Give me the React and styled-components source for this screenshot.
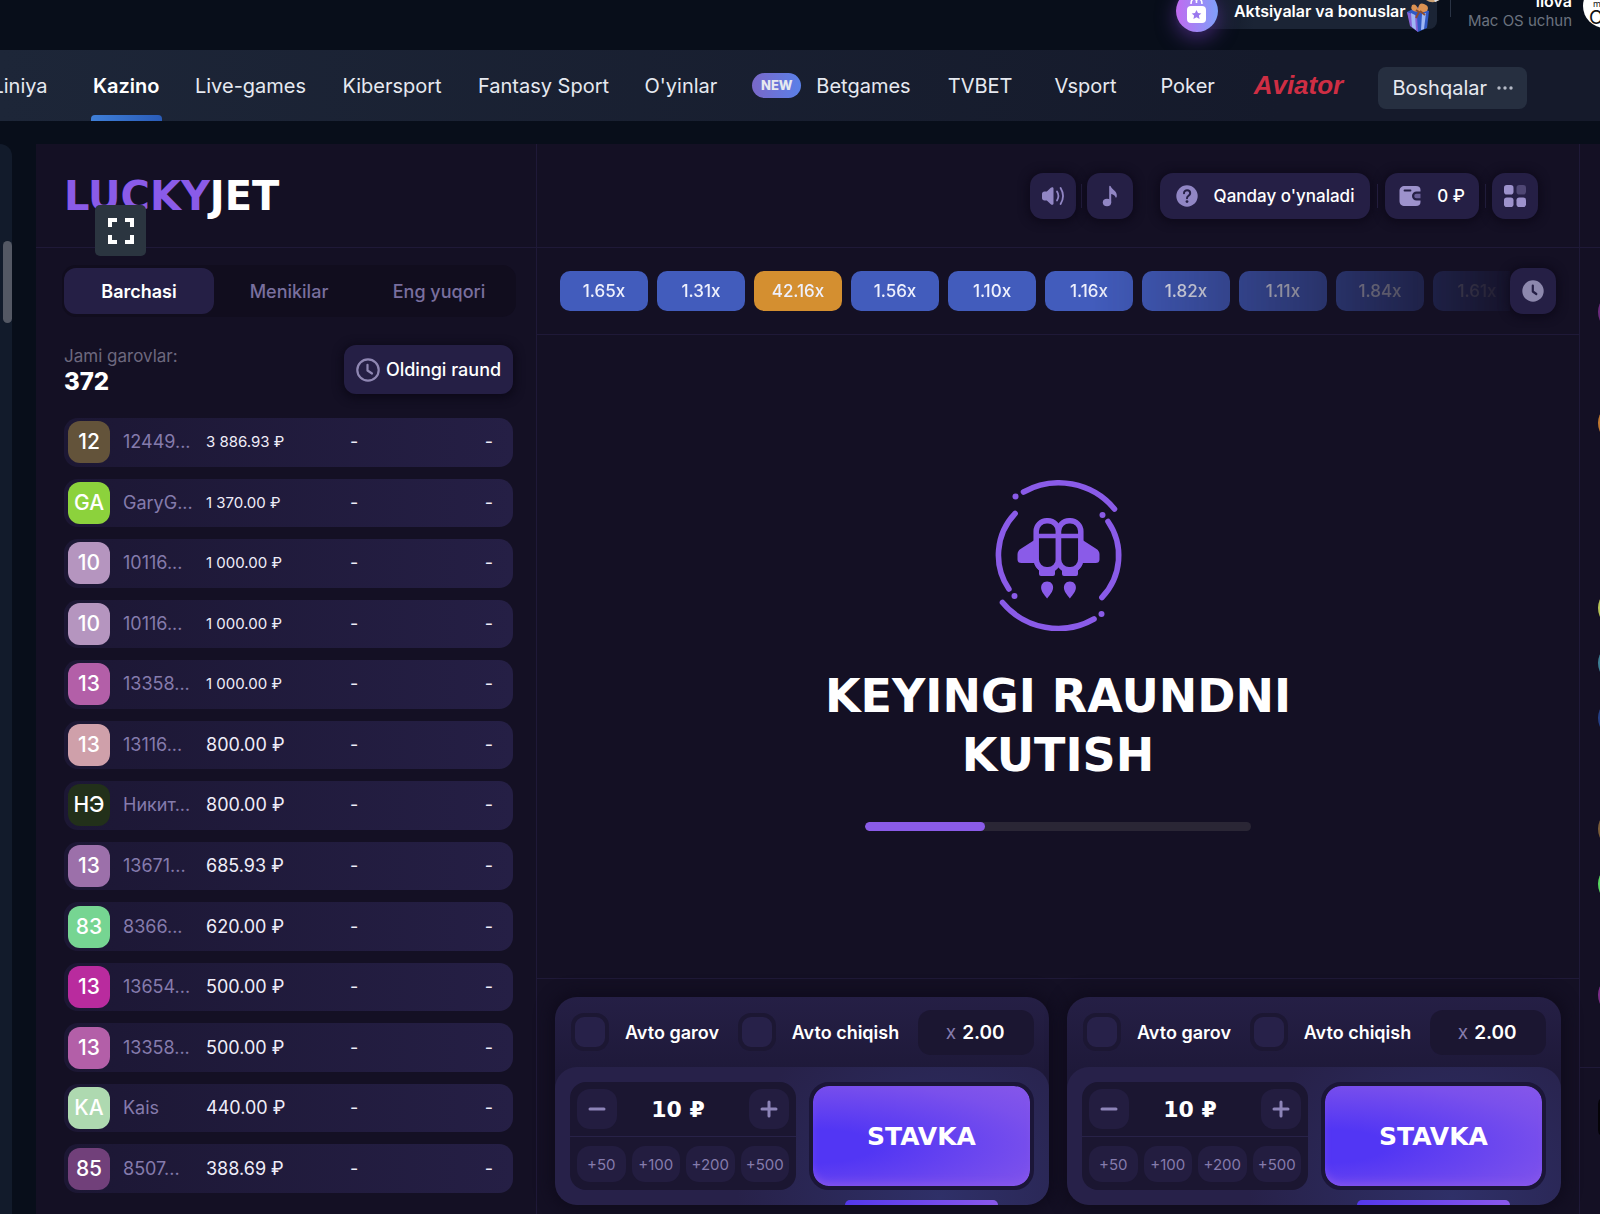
import React from 'react'
import styled, { createGlobalStyle } from 'styled-components'

const GlobalStyle = createGlobalStyle`
    *, *::before, *::after{
        box-sizing: border-box;
    }

    body{
        margin: 0;
        background: #080e1a;
        color: #fff;
        font-family: Inter, "Noto Sans", sans-serif;
        overflow-x: hidden;
    }

    button, input{
        font: inherit;
        color: inherit;
        border: none;
        margin: 0;
        padding: 0;
    }

    button{
        background: none;
        cursor: pointer;
    }

    a{
        color: inherit;
        text-decoration: none;
    }
`

const wideFont = '"DejaVu Sans", Verdana, sans-serif'

const Page = styled.div`
    min-height: 100vh;
    display: flex;
    flex-direction: column;
    overflow: hidden;
`

/* top bar */

const TopBar = styled.header`
    height: 50px;
    display: flex;
    justify-content: flex-end;
    align-items: flex-end;
    overflow: hidden;
    padding-bottom: 18px;
`

const Promo = styled.a`
    position: relative;
    width: 261px;
    height: 40px;
    margin-right: 13px;
    margin-bottom: 3px;
    padding-left: 58px;
    padding-top: 4px;
    display: flex;
    align-items: center;
    border-radius: 8px;
    background: linear-gradient(90deg, #0b1120, #1b2435 30%, #1b2435);
    font-size: 16px;
    font-weight: 600;
    line-height: 20px;
    white-space: nowrap;
`

const PromoBadge = styled.span`
    position: absolute;
    left: 0;
    bottom: -3px;
    width: 42px;
    height: 42px;
    border-radius: 50%;
    background: linear-gradient(90deg, #c06bf0, #7fa0fa);
    box-shadow: 0 6px 20px #7a3fc488;
    display: flex;
    justify-content: center;
    align-items: center;
`

const PromoGifts = styled.svg`
    position: absolute;
    right: -8px;
    bottom: -3px;
`

const AppLink = styled.a`
    display: flex;
    align-items: flex-end;
    gap: 11px;
    margin-right: -27px;
    padding-left: 18px;
    font-size: 15px;
    line-height: 20px;
    text-align: right;
    white-space: nowrap;
    color: #6b727f;
    background: linear-gradient(#2a3344, #2a3344) 0 0 / 1px 33px no-repeat;

    strong{
        display: block;
        font-size: 16px;
        font-weight: 600;
        color: #fff;
    }
`

const AppText = styled.span`
    margin-bottom: 1px;
`

const MacBadge = styled.span`
    width: 44px;
    height: 44px;
    margin-bottom: 4px;
    border-radius: 50%;
    background: #fff;
    color: #111;
    padding: 15px 0 0 6px;
    text-align: left;
    font-size: 19px;
    line-height: 18px;

    small{
        display: block;
        font-size: 9px;
        line-height: 10px;
        padding-left: 4px;
    }
`

/* navigation */

const Nav = styled.nav`
    height: 71px;
    display: flex;
    align-items: stretch;
    overflow: hidden;
    background: linear-gradient(90deg, #1d2638, #151a2b 80%);
`

const NavLink = styled.a`
    position: relative;
    display: flex;
    align-items: center;
    justify-content: center;
    gap: 15px;
    flex: 0 0 auto;
    min-width: ${({ $width }) => $width}px;
    margin-right: 35px;
    font-size: 20px;
    font-weight: ${({ $active }) => ($active ? 600 : 400)};
    color: ${({ $active }) => ($active ? '#fff' : '#e6e9f0')};
    white-space: nowrap;

    &::after{
        content: "";
        display: ${({ $active }) => ($active ? 'block' : 'none')};
        position: absolute;
        left: -2px;
        right: -2px;
        bottom: 0;
        height: 6px;
        border-radius: 4px 4px 0 0;
        background: linear-gradient(90deg, #3f7fd8, #2a5cb8);
    }
`

const FirstLink = styled(NavLink)`
    margin-left: -9px;
    margin-right: 44px;
`

const NewTag = styled.span`
    width: 49px;
    height: 25px;
    border-radius: 13px;
    background: linear-gradient(90deg, #7a68c8, #5a80e8);
    font-size: 13px;
    font-weight: 800;
    line-height: 25px;
    text-align: center;
`

const AviatorLink = styled(NavLink)`
    font-family: "Liberation Sans Narrow", "Liberation Sans", sans-serif;
    font-size: 26px;
    font-style: italic;
    font-weight: 700;
    color: #cf2e44;
`

const MoreButton = styled.button`
    align-self: center;
    flex: 0 0 auto;
    width: 149px;
    height: 42px;
    margin-top: 4px;
    display: flex;
    align-items: center;
    justify-content: center;
    gap: 10px;
    border-radius: 8px;
    background: #262f40;
    font-size: 20px;
    color: #e6e9f0;
`

/* body */

const Body = styled.div`
    flex: 1;
    display: flex;
    gap: 24px;
    padding-top: 23px;
`

const Rail = styled.aside`
    width: 12px;
    padding: 97px 0 0 3px;
    border-radius: 0 14px 0 0;
    background: #121b2b;
`

const RailThumb = styled.div`
    height: 82px;
    border-radius: 5px;
    background: #545864;
`

const Game = styled.div`
    flex: 1;
    min-width: 0;
    display: grid;
    grid-template-columns: 501px 1fr 20px;
    background: #141024;
`

const Column = styled.section`
    display: flex;
    flex-direction: column;
    min-width: 0;
    border-right: 1px solid #1f1938;
`

const ColumnHeader = styled.div`
    position: relative;
    height: 104px;
    display: flex;
    align-items: center;
    padding-left: 28px;
    padding-right: ${({ $right }) => $right || 0}px;
    justify-content: ${({ $right }) => ($right ? 'flex-end' : 'flex-start')};
    border-bottom: 1px solid #1f1938;
`

const Logo = styled.h1`
    margin: 0;
    font-family: ${wideFont};
    font-size: 40px;
    font-weight: 700;
    line-height: 40px;
    color: #fff;

    span{
        color: #8a5be8;
    }
`

const FullscreenButton = styled.button`
    position: absolute;
    left: 59px;
    top: 61px;
    width: 51px;
    height: 51px;
    border-radius: 5px;
    background: #2b3540;
    display: flex;
    align-items: center;
    justify-content: center;
`

const Tabs = styled.div`
    display: grid;
    grid-template-columns: 1fr 1fr 1fr;
    margin: 17px 20px 28px 26px;
    padding: 3px 2px;
    border-radius: 14px;
    background: #110d1e;
`

const Tab = styled.button`
    height: 46px;
    border-radius: 12px;
    background: ${({ $active }) => ($active ? '#251f45' : 'transparent')};
    color: ${({ $active }) => ($active ? '#fff' : '#796f9e')};
    font-size: 18px;
    font-weight: ${({ $active }) => ($active ? 600 : 500)};
`

const Summary = styled.div`
    display: flex;
    justify-content: space-between;
    align-items: center;
    margin: 0 23px 24px 28px;
    height: 49px;
`

const SummaryLabel = styled.div`
    font-size: 17px;
    line-height: 24px;
    color: #6d687e;

    strong{
        display: block;
        font-size: 24px;
        font-weight: 800;
        line-height: 28px;
        color: #fff;
    }
`

const PreviousButton = styled.button`
    width: 169px;
    height: 49px;
    display: flex;
    align-items: center;
    justify-content: center;
    gap: 6px;
    border-radius: 12px;
    background: #251f45;
    box-shadow: 0 2px 10px 2px #0c0918;
    font-size: 18px;
    font-weight: 500;
    white-space: nowrap;
`

const BetTable = styled.table`
    flex: 1;
    display: flex;
    margin: 0 23px 21px 28px;
`

const BetBody = styled.tbody`
    flex: 1;
    display: grid;
    grid-auto-rows: 1fr;
    gap: 12px;
`

const BetRow = styled.tr`
    display: grid;
    grid-template-columns: 42px 70px 131px 1fr auto;
    align-items: center;
    gap: 13px;
    min-height: 48px;
    padding: 0 20px 0 4px;
    border-radius: 14px;
    background: linear-gradient(90deg, #1c1734, #251f45);
    font-size: 18px;
    line-height: 24px;
    color: #efedf9;

    td{
        padding: 0;
        white-space: nowrap;
    }
`

const Avatar = styled.div`
    height: 42px;
    border-radius: 12px;
    background: ${({ $color }) => $color};
    font-size: 21px;
    font-weight: 500;
    line-height: 42px;
    text-align: center;
    color: #fff;
`

const Player = styled.td`
    color: #857bac;
`

const Amount = styled.td`
    font-size: ${({ $small }) => ($small ? 15 : 18)}px;
`

/* game column */

const Tool = styled.button`
    width: ${({ $width }) => $width}px;
    height: 46px;
    display: flex;
    align-items: center;
    justify-content: center;
    gap: 16px;
    border-radius: 13px;
    background: #251f45;
    box-shadow: 0 1px 8px 3px #0e0a1b;
    font-size: 17px;
    font-weight: 500;
    white-space: nowrap;
`

const ToolLine = styled.i`
    width: 1px;
    height: 24px;
    margin: 0 ${({ $gap }) => $gap}px;
    background: #272144;
`

const ToolSpace = styled.i`
    width: 27px;
`

const History = styled.div`
    height: 87px;
    display: flex;
    align-items: center;
    padding: 0 23px;
    border-bottom: 1px solid #1f1938;
`

const HistoryList = styled.div`
    flex: 1;
    min-width: 0;
    display: flex;
    gap: 9px;
    overflow: hidden;
    mask-image: linear-gradient(90deg, #000 56%, transparent 102%);
`

const Multiplier = styled.button`
    flex: 0 0 88px;
    height: 40px;
    border-radius: 10px;
    background: ${({ $hot }) => ($hot ? '#d48f30' : '#425cbc')};
    font-size: 17px;
    font-weight: 500;
    color: #eef0fc;
`

const Stage = styled.div`
    flex: 1;
    display: flex;
    flex-direction: column;
    align-items: center;
    justify-content: center;
    padding-bottom: 2px;
`

const StageTitle = styled.h2`
    max-width: 540px;
    margin: 36px 0 37px;
    font-family: ${wideFont};
    font-size: 46px;
    font-weight: 700;
    line-height: 59px;
    text-align: center;
`

const Progress = styled.div`
    width: 386px;
    height: 9px;
    border-radius: 5px;
    background: #2a2635;
    overflow: hidden;
`

const ProgressFill = styled.div`
    height: 9px;
    border-radius: 5px;
    background: #8a5be8;
`

const Bets = styled.div`
    display: grid;
    grid-template-columns: 1fr 1fr;
    gap: 18px;
    padding: 18px 18px 9px;
    border-top: 1px solid #1f1938;
`

const BetPanel = styled.form`
    border-radius: 22px;
    background: linear-gradient(180deg, #251f45, #1e1939 36%);
    box-shadow: 0 0 16px 4px #0f0b1c;
    overflow: hidden;
`

const AutoRow = styled.div`
    height: 70px;
    display: flex;
    align-items: center;
    justify-content: space-between;
    padding: 0 15px 0 16px;
`

const AutoLabel = styled.label`
    display: flex;
    align-items: center;
    gap: 16px;
    font-size: 18px;
    font-weight: 600;
    white-space: nowrap;
`

const AutoCheckbox = styled.input`
    appearance: none;
    width: 38px;
    height: 38px;
    border: 4px solid #1c1733;
    border-radius: 13px;
    background: #272149;
`

const CashoutField = styled.label`
    width: 116px;
    height: 45px;
    display: flex;
    align-items: center;
    justify-content: center;
    gap: 6px;
    border-radius: 13px;
    background: #1b1631;
    font-size: 19px;
    color: #857bac;

    input{
        width: 44px;
        background: none;
        font-weight: 600;
        color: #fff;
    }
`

const StakeRow = styled.div`
    position: relative;
    height: 138px;
    display: flex;
    gap: 13px;
    padding: 15px;
    border-radius: 22px;
    background: radial-gradient(circle at 78% 95%, #2f3068, #272149 50%);

    &::after{
        content: "";
        position: absolute;
        right: 51px;
        bottom: 0;
        width: 153px;
        height: 5px;
        border-radius: 5px 5px 0 0;
        background: linear-gradient(90deg, #5338ec, #8a58ec);
    }
`

const StakeBox = styled.div`
    flex: 0 0 226px;
    border-radius: 16px;
    background: #1b1631;
`

const StakeTop = styled.div`
    height: 55px;
    display: flex;
    align-items: center;
    justify-content: space-between;
    padding: 0 7px;
    border-bottom: 1px solid #282248;
`

const StepButton = styled.button`
    width: 40px;
    height: 40px;
    border-radius: 13px;
    background: #231d40;
    display: flex;
    align-items: center;
    justify-content: center;
`

const StakeInput = styled.input`
    width: 122px;
    padding-right: 10px;
    background: none;
    font-family: ${wideFont};
    font-size: 22px;
    font-weight: 700;
    text-align: center;
`

const QuickRow = styled.div`
    display: grid;
    grid-template-columns: repeat(4, 1fr);
    gap: 6px;
    padding: 9px 7px;
`

const QuickButton = styled.button`
    height: 36px;
    border-radius: 13px;
    background: #231d40;
    font-size: 15px;
    color: #857bac;
`

const PlaceBet = styled.button`
    flex: 1;
    border: 4px solid #1b1638;
    border-radius: 20px;
    background: radial-gradient(ellipse at 0% 60%, #5236f4 20%, #7a50ec 75%, #8657ea) padding-box;
    box-shadow: inset 0 -6px 10px -4px #8a58ec;
    font-family: ${wideFont};
    font-size: 25px;
    font-weight: 700;
`

/* chat */

const Chat = styled.aside`
    display: flex;
    flex-direction: column;
    overflow: hidden;
`

const ChatList = styled.div`
    flex: 1;
    margin-top: 103px;
    padding: 44px 0 0 18px;
    border-top: 1px solid #1f1938;
`

const ChatMessage = styled.div`
    height: ${({ $height }) => $height}px;
`

const ChatAvatar = styled.div`
    width: 40px;
    height: 40px;
    border-radius: 50%;
    background: ${({ $color }) => $color};
`

const ChatInput = styled.div`
    height: 147px;
    padding: 28px 0 0 18px;
    border-top: 1px solid #1f1938;

    input{
        width: 300px;
        height: 42px;
        border-radius: 8px;
        background: #050308;
    }
`

const navItems = [
    { label: 'Kazino', width: 65, active: true },
    { label: 'Live-games', width: 112 },
    { label: 'Kibersport', width: 101 },
    { label: 'Fantasy Sport', width: 132 },
    { label: "O'yinlar", width: 72 },
    { label: 'Betgames', width: 158, isNew: true },
    { label: 'TVBET', width: 69 },
    { label: 'Vsport', width: 72 },
    { label: 'Poker', width: 62 },
]

const bets = [
    { tag: '12', name: '12449...', amount: '3 886.93 ₽', color: '#63533a' },
    { tag: 'GA', name: 'GaryG...', amount: '1 370.00 ₽', color: '#8cd23c' },
    { tag: '10', name: '10116...', amount: '1 000.00 ₽', color: '#b595bf' },
    { tag: '10', name: '10116...', amount: '1 000.00 ₽', color: '#b595bf' },
    { tag: '13', name: '13358...', amount: '1 000.00 ₽', color: '#b35fa8' },
    { tag: '13', name: '13116...', amount: '800.00 ₽', color: '#cfa0aa' },
    { tag: 'НЭ', name: 'Никит...', amount: '800.00 ₽', color: '#22301a' },
    { tag: '13', name: '13671...', amount: '685.93 ₽', color: '#9c70aa' },
    { tag: '83', name: '8366...', amount: '620.00 ₽', color: '#76d592' },
    { tag: '13', name: '13654...', amount: '500.00 ₽', color: '#b92b9e' },
    { tag: '13', name: '13358...', amount: '500.00 ₽', color: '#b35fa8' },
    { tag: 'KA', name: 'Kais', amount: '440.00 ₽', color: '#aed9b0' },
    { tag: '85', name: '8507...', amount: '388.69 ₽', color: '#71407a' },
]

const multipliers = ['1.65x', '1.31x', '42.16x', '1.56x', '1.10x', '1.16x', '1.82x', '1.11x', '1.84x', '1.61x']

const messages = [
    { height: 111, color: '#6b2a7c' },
    { height: 185, color: '#c07830' },
    { height: 55, color: '#b6c456' },
    { height: 55, color: '#3d7f94' },
    { height: 111, color: '#243f86' },
    { height: 55, color: '#7a5c38' },
    { height: 111, color: '#58d860' },
    { height: 55, color: '#7c2c88' },
]

const SoundIcon = () => (
    <svg width="24" height="24" viewBox="0 0 24 24" fill="none" stroke="#9186c4" strokeLinecap="round">
        <path d="M3.500 7.500h2.300l4-3.700c1.200-1 2.700-.6 2.700.8v14.800c0 1.400-1.500 1.800-2.700.8l-4-3.700H3.500C2 16.500 1 15.500 1 14v-4C1 8.500 2 7.500 3.500 7.500z" fill="#9186c4" stroke="none" />
        <path d="M16 7.500c1.700 2.700 1.700 6.300 0 9" strokeWidth="1.800" />
        <path d="M19.600 4c3 4.900 3 11.100 0 16" strokeWidth="1.800" />
    </svg>
)

const NoteIcon = () => (
    <svg width="24" height="24" viewBox="0 0 24 24" fill="#9186c4">
        <ellipse cx="9" cy="18.500" rx="4.200" ry="3.700" />
        <path d="M11.200 2.500c0-1 1.300-1 1.600-.1 1 3 6.400 4.300 6 9.600-.1 1.500-.9 2.300-1.200 1.200-.4-1.500-2-2.600-4.400-3.200V18.500h-2z" />
    </svg>
)

const HelpIcon = () => (
    <svg width="22" height="22" viewBox="0 0 22 22" fill="none">
        <circle cx="11" cy="11" r="10.700" fill="#9186c4" />
        <path d="M8 8.300c0-4 6.200-3.800 6.200-.1 0 2.600-3.200 2.500-3.200 5" stroke="#251f45" strokeWidth="2" strokeLinecap="round" />
        <circle cx="11" cy="16.600" r="1.400" fill="#251f45" />
    </svg>
)

const WalletIcon = () => (
    <svg width="22" height="22" viewBox="0 0 22 22" fill="none">
        <path d="M6 1h11c3 0 4.500 1.500 4.500 4v1.500h-4a4.500 4.500 0 0 0 0 9h4V17c0 2.500-1.500 4-4.500 4H6c-3.500 0-5.500-2-5.500-5V6c0-3 2-5 5.500-5z" fill="#9d92cc" />
        <path d="M5.500 5.500h6" stroke="#251f45" strokeWidth="1.800" strokeLinecap="round" />
        <path d="M17.500 8.700h4v4.600h-4a2.300 2.300 0 0 1 0-4.600z" fill="#6a5f98" />
    </svg>
)

const GridIcon = () => (
    <svg width="22" height="22" viewBox="0 0 22 22" fill="#9d92cc">
        <rect width="9.500" height="9.500" rx="2.800" />
        <rect x="12.500" width="9.500" height="9.500" rx="2.800" opacity="0.350" />
        <rect y="12.500" width="9.500" height="9.500" rx="2.800" />
        <rect x="12.500" y="12.500" width="9.500" height="9.500" rx="2.800" />
    </svg>
)

const HistoryIcon = () => (
    <svg width="22" height="22" viewBox="0 0 22 22" fill="none">
        <circle cx="11" cy="11" r="10.700" fill="#8d88ad" />
        <path d="M10.800 5.500v6l3.500 2.500" stroke="#251f45" strokeWidth="2.200" strokeLinecap="round" strokeLinejoin="round" />
    </svg>
)

const ClockIcon = () => (
    <svg width="24" height="24" viewBox="0 0 24 24" fill="none" stroke="#8f87b3" strokeWidth="2.200" strokeLinecap="round" strokeLinejoin="round">
        <circle cx="12" cy="12" r="10.700" />
        <path d="M11.500 6.800v5.700l4.500 3" />
    </svg>
)

const FullscreenIcon = () => (
    <svg width="26" height="26" viewBox="0 0 26 26" fill="none" stroke="#fff" strokeWidth="4">
        <path d="M2 9V2h7M17 2h7v7M24 17v7h-7M9 24H2v-7" />
    </svg>
)

const JetIcon = () => (
    <svg width="151" height="151" viewBox="-75.500 -75.500 151 151" fill="none" stroke="#8a5be8" strokeWidth="5.600" strokeLinecap="round">
        <path d="M-35-63.500A72.600 72.600 0 0 1 56-46.500" />
        <path d="M-56 47A72.600 72.600 0 0 0 35.500 63.500" />
        <path d="M-43.400-42A60.200 60.200 0 0 0-49.600 33.500" />
        <path d="M49.500-34A60.200 60.200 0 0 1 43.400 42" />
        <g fill="#8a5be8" stroke="none">
            <circle cx="-43" cy="-59" r="3" />
            <circle cx="44" cy="-40.500" r="3" />
            <circle cx="-44" cy="40.500" r="3" />
            <circle cx="43" cy="58.500" r="3" />
            <path d="M-24-15.500L-38-6.500Q-41-4.500-41-1V4Q-41 7.500-37 7.500H-24zM24-15.500L38-6.500Q41-4.500 41-1V4Q41 7.500 37 7.500H24z" />
            <path d="M-24 9l4.500 6v3.500q0 2 2 2h12q2 0 2-2V15L0 11.500 3.500 15v3.500q0 2 2 2h12q2 0 2-2V15L24 9z" />
            <path d="M-11.400 26c4 0 6 3 6 6 0 4-3 7-6 11-3-4-6-7-6-11 0-3 2-6 6-6zM11.400 26c4 0 6 3 6 6 0 4-3 7-6 11-3-4-6-7-6-11 0-3 2-6 6-6z" />
        </g>
        <g fill="#141024" strokeWidth="5.500">
            <rect x="-22.300" y="-34.700" width="22.300" height="49" rx="10.500" />
            <rect x="0" y="-34.700" width="22.300" height="49" rx="10.500" />
            <path d="M-21-19.500H21" strokeWidth="4.500" />
        </g>
    </svg>
)

const GiftIcon = () => (
    <PromoGifts width="46" height="40" viewBox="0 0 46 40">
        <path d="M24 0h20l-2 7q-8 6-15 1z" fill="#cda274" />
        <path d="M34 5l8-3v5l-6 3z" fill="#d9dfeb" />
        <path d="M8 20l10-5 12 4-2 17-9 4-7-6z" fill="#3158c4" />
        <path d="M8 20l10 4 1 16-8-6z" fill="#8862d4" />
        <path d="M12 21l4 2 1 15-4-3zM23 22l4-1-2 16-3 1z" fill="#9fb7f4" />
        <path d="M19 20q-9-1-6-7 4-2 6 4 1-7 6-5 6 2 3 7-4 2-9 1z" fill="#dc9252" />
        <path d="M17 18l3 2-3 6M21 19l5 4" stroke="#8f4e30" strokeWidth="2" fill="none" />
    </PromoGifts>
)

const CalendarIcon = () => (
    <svg width="20" height="26" viewBox="0 0 20 26" fill="#fff">
        <rect y="8" width="19" height="17" rx="4" />
        <path d="M4 6q0-5 3-5t2.500 4Q9 1 12 1t3 5" fill="none" stroke="#fff" strokeWidth="1.500" />
        <path d="M9.500 12l1.500 3 3.300.4-2.400 2.200.7 3.300-3.100-1.600-3.100 1.600.7-3.300-2.400-2.200L8 15z" fill="#9a78ee" />
    </svg>
)

const StepIcon = ({ plus }) => (
    <svg width="18" height="18" viewBox="0 0 18 18" stroke="#8d84b8" strokeWidth="3" strokeLinecap="round">
        <path d={plus ? 'M2 9h14M9 2v14' : 'M2 9h14'} />
    </svg>
)

const DotsIcon = () => (
    <svg width="16" height="4" viewBox="0 0 16 4" fill="#b5bac6">
        <circle cx="2" cy="2" r="1.700" />
        <circle cx="8" cy="2" r="1.700" />
        <circle cx="14" cy="2" r="1.700" />
    </svg>
)

const BetForm = () => {
    return (
        <BetPanel onSubmit={(e) => e.preventDefault()}>
            <AutoRow>
                <AutoLabel>
                    <AutoCheckbox type="checkbox" />
                    Avto garov
                </AutoLabel>
                <AutoLabel>
                    <AutoCheckbox type="checkbox" />
                    Avto chiqish
                </AutoLabel>
                <CashoutField>
                    x
                    <input type="text" defaultValue="2.00" />
                </CashoutField>
            </AutoRow>
            <StakeRow>
                <StakeBox>
                    <StakeTop>
                        <StepButton type="button" aria-label="Kamaytirish"><StepIcon /></StepButton>
                        <StakeInput type="text" defaultValue="10 ₽" aria-label="Garov" />
                        <StepButton type="button" aria-label="Oshirish"><StepIcon plus /></StepButton>
                    </StakeTop>
                    <QuickRow>
                        {['+50', '+100', '+200', '+500'].map((value) => (
                            <QuickButton type="button" key={value}>{value}</QuickButton>
                        ))}
                    </QuickRow>
                </StakeBox>
                <PlaceBet type="submit">STAVKA</PlaceBet>
            </StakeRow>
        </BetPanel>
    )
}

const BetList = () => {
    return (
        <Column>
            <ColumnHeader>
                <Logo><span>LUCKY</span>JET</Logo>
                <FullscreenButton aria-label="To'liq ekran"><FullscreenIcon /></FullscreenButton>
            </ColumnHeader>
            <Tabs>
                <Tab $active>Barchasi</Tab>
                <Tab>Menikilar</Tab>
                <Tab>Eng yuqori</Tab>
            </Tabs>
            <Summary>
                <SummaryLabel>Jami garovlar: <strong>372</strong></SummaryLabel>
                <PreviousButton><ClockIcon />Oldingi raund</PreviousButton>
            </Summary>
            <BetTable>
                <BetBody>
                    {bets.map((bet, index) => (
                        <BetRow key={index}>
                            <td><Avatar $color={bet.color}>{bet.tag}</Avatar></td>
                            <Player>{bet.name}</Player>
                            <Amount $small={bet.amount.length > 8}>{bet.amount}</Amount>
                            <td>-</td>
                            <td>-</td>
                        </BetRow>
                    ))}
                </BetBody>
            </BetTable>
        </Column>
    )
}

const GameColumn = ({ progress }) => {
    return (
        <Column>
            <ColumnHeader $right={41}>
                <Tool $width={46} aria-label="Ovoz"><SoundIcon /></Tool>
                <ToolLine $gap={5} />
                <Tool $width={46} aria-label="Musiqa"><NoteIcon /></Tool>
                <ToolSpace />
                <Tool $width={210}><HelpIcon />Qanday o'ynaladi</Tool>
                <ToolLine $gap={7} />
                <Tool $width={94}><WalletIcon />0 ₽</Tool>
                <ToolLine $gap={6} />
                <Tool $width={46} aria-label="Menyu"><GridIcon /></Tool>
            </ColumnHeader>
            <History>
                <HistoryList>
                    {multipliers.map((value) => (
                        <Multiplier key={value} $hot={parseFloat(value) > 10}>{value}</Multiplier>
                    ))}
                </HistoryList>
                <Tool $width={46} aria-label="Tarix"><HistoryIcon /></Tool>
            </History>
            <Stage>
                <JetIcon />
                <StageTitle>KEYINGI RAUNDNI KUTISH</StageTitle>
                <Progress>
                    <ProgressFill style={{ width: `${progress}%` }} />
                </Progress>
            </Stage>
            <Bets>
                <BetForm />
                <BetForm />
            </Bets>
        </Column>
    )
}

const App = () => {
    return (
        <Page>
            <GlobalStyle />
            <TopBar>
                <Promo href="#">
                    <PromoBadge><CalendarIcon /></PromoBadge>
                    Aktsiyalar va bonuslar
                    <GiftIcon />
                </Promo>
                <AppLink href="#">
                    <AppText><strong>ilova</strong>Mac OS uchun</AppText>
                    <MacBadge><small>m</small>OS</MacBadge>
                </AppLink>
            </TopBar>
            <Nav>
                <FirstLink href="#" $width={58}>Liniya</FirstLink>
                {navItems.map((item) => (
                    <NavLink href="#" key={item.label} $width={item.width} $active={item.active}>
                        {item.isNew && <NewTag>NEW</NewTag>}
                        {item.label}
                    </NavLink>
                ))}
                <AviatorLink href="#" $width={89}>Aviator</AviatorLink>
                <MoreButton>Boshqalar <DotsIcon /></MoreButton>
            </Nav>
            <Body>
                <Rail><RailThumb /></Rail>
                <Game>
                    <BetList />
                    <GameColumn progress={31} />
                    <Chat>
                        <ChatList>
                            {messages.map((message, index) => (
                                <ChatMessage key={index} $height={message.height}>
                                    <ChatAvatar $color={message.color} />
                                </ChatMessage>
                            ))}
                        </ChatList>
                        <ChatInput><input type="text" aria-label="Xabar" /></ChatInput>
                    </Chat>
                </Game>
            </Body>
        </Page>
    )
}

export default App
